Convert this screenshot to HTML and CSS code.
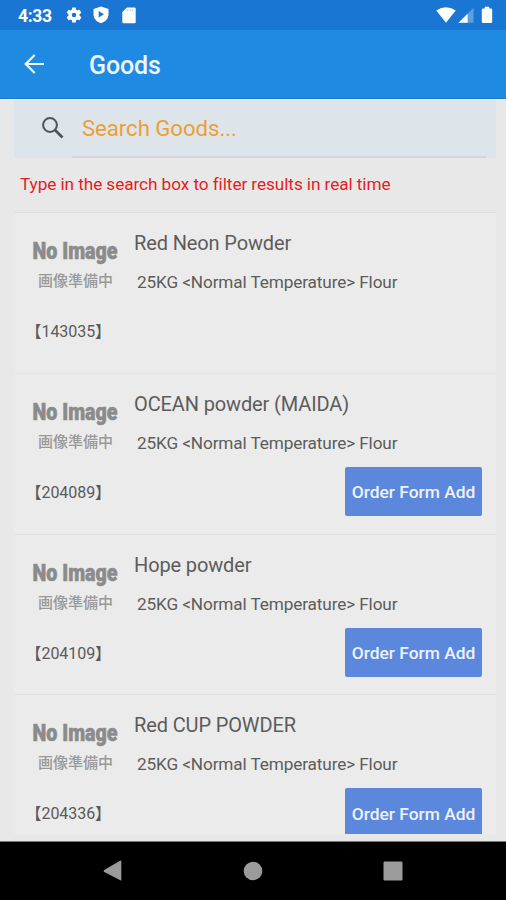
FILE: index.html
```html
<!DOCTYPE html>
<html lang="en">
<head>
<meta charset="utf-8">
<title>Goods</title>
<link rel="stylesheet" href="styles.css">
</head>
<body>
<div class="status">
  <span class="clock">4:33</span>
  <svg class="s-gear" width="18" height="18" viewBox="0 0 24 24"><path fill="#fff" fill-rule="evenodd" d="M19.4 13a7.500 7.500 0 0 0 0-2l2.100-1.650a.5.5 0 0 0 .12-.64l-2-3.460a.5.5 0 0 0-.61-.22l-2.490 1a7.300 7.300 0 0 0-1.690-.98l-.38-2.650A.5.5 0 0 0 14 2h-4a.5.5 0 0 0-.49.42l-.38 2.650c-.61.25-1.170.59-1.690.98l-2.490-1a.5.5 0 0 0-.61.22l-2 3.460a.5.5 0 0 0 .12.64L4.600 11a7.900 7.900 0 0 0 0 2l-2.110 1.650a.5.5 0 0 0-.12.64l2 3.460c.12.22.39.3.61.22l2.490-1c.52.4 1.080.73 1.690.98l.38 2.650c.03.24.24.42.49.42h4c.25 0 .46-.18.49-.42l.38-2.650c.61-.25 1.170-.59 1.690-.98l2.490 1c.23.09.49 0 .61-.22l2-3.460a.5.5 0 0 0-.12-.64zM12 15a3 3 0 1 1 0-6 3 3 0 0 1 0 6z"/></svg>
  <svg class="s-shield" width="18" height="20" viewBox="0 0 18 20"><path fill="#fff" fill-rule="evenodd" d="M9 1.500 16.500 4v5c0 4.600-3 7.800-7.500 9.200C4.500 16.800 1.500 13.600 1.500 9V4zM6.700 6v6.400L12 9.200z"/></svg>
  <svg class="s-card" width="14" height="17" viewBox="0 0 14 17"><path fill="#fff" d="M5 .5h7.500q1.200 0 1.200 1.200v13.200q0 1.300-1.200 1.300H1.600q-1.300 0-1.300-1.300V5z"/><path stroke="#1976d2" stroke-width="1" opacity=".4" d="M5.700 2.200v2M8.200 2.200v2M10.700 2.200v2"/></svg>
  <span class="spacer"></span>
  <svg class="s-wifi" width="20" height="17" viewBox="0 0 20 17"><path fill="#fff" d="M.3 3.400Q10-2.700 19.700 3.400L10 15.800z"/></svg>
  <svg class="s-cell" width="16" height="17" viewBox="0 0 16 17"><path fill="#fff" opacity=".3" d="M15.500.8v15H.5z"/><path fill="#fff" d="M9.600 6.700v9.100H.5z"/></svg>
  <svg class="s-batt" width="12" height="18" viewBox="0 0 12 18"><path fill="#fff" d="M3.800.8h4.400v1.700h1.700q1.300 0 1.300 1.300v12q0 1.300-1.300 1.300H2.100Q.8 17.100.8 15.800v-12q0-1.300 1.300-1.300h1.700z"/></svg>
</div>
<header class="appbar">
  <svg class="back" width="22" height="22" viewBox="0 0 22 22"><path fill="none" stroke="#eef5fc" stroke-width="2.200" d="M21 11H3M11.700 2 2.700 11l9 9"/></svg>
  <h1>Goods</h1>
</header>
<main class="content">
  <div class="search">
    <svg class="glass" width="24" height="24" viewBox="0 0 24 24"><circle cx="9" cy="9" r="6.900" fill="none" stroke="#4c545a" stroke-width="2"/><path stroke="#4c545a" stroke-width="2.700" d="m13.500 13.500 8 8"/></svg>
    <div class="field"><span>Search Goods...</span></div>
  </div>
  <p class="hint"><span>Type in the search box to filter results in real time</span></p>
  <section class="list">
    <article class="row">
      <svg class="noimg" width="90" height="78" viewBox="0 0 90 78"><rect width="90" height="78" fill="#eaebea"/><text class="ni-en" x="1.500" y="34.500" textLength="85" lengthAdjust="spacingAndGlyphs">No Image</text><text class="ni-jp" x="7" y="62.300" textLength="75">画像準備中</text></svg>
      <div class="info"><h2>Red Neon Powder</h2><p>25KG &lt;Normal Temperature&gt; Flour</p></div>
      <span class="code">【143035】</span>
    </article>
    <article class="row faint">
      <svg class="noimg" width="90" height="78" viewBox="0 0 90 78"><rect width="90" height="78" fill="#eaebea"/><text class="ni-en" x="1.500" y="34.500" textLength="85" lengthAdjust="spacingAndGlyphs">No Image</text><text class="ni-jp" x="7" y="62.300" textLength="75">画像準備中</text></svg>
      <div class="info"><h2>OCEAN powder (MAIDA)</h2><p>25KG &lt;Normal Temperature&gt; Flour</p></div>
      <span class="code">【204089】</span>
      <button class="add">Order Form Add</button>
    </article>
    <article class="row">
      <svg class="noimg" width="90" height="78" viewBox="0 0 90 78"><rect width="90" height="78" fill="#eaebea"/><text class="ni-en" x="1.500" y="34.500" textLength="85" lengthAdjust="spacingAndGlyphs">No Image</text><text class="ni-jp" x="7" y="62.300" textLength="75">画像準備中</text></svg>
      <div class="info"><h2>Hope powder</h2><p>25KG &lt;Normal Temperature&gt; Flour</p></div>
      <span class="code">【204109】</span>
      <button class="add">Order Form Add</button>
    </article>
    <article class="row">
      <svg class="noimg" width="90" height="78" viewBox="0 0 90 78"><rect width="90" height="78" fill="#eaebea"/><text class="ni-en" x="1.500" y="34.500" textLength="85" lengthAdjust="spacingAndGlyphs">No Image</text><text class="ni-jp" x="7" y="62.300" textLength="75">画像準備中</text></svg>
      <div class="info"><h2>Red CUP POWDER</h2><p>25KG &lt;Normal Temperature&gt; Flour</p></div>
      <span class="code">【204336】</span>
      <button class="add">Order Form Add</button>
    </article>
  </section>
</main>
<nav class="navbar">
  <svg width="20" height="22" viewBox="0 0 20 22"><path fill="#9b9b9b" d="M18.300.8v20L.8 11.800v-1.500L17.500.6z"/></svg>
  <svg width="20" height="20" viewBox="0 0 20 20"><circle cx="10" cy="10" r="9.300" fill="#9b9b9b"/></svg>
  <svg width="20" height="20" viewBox="0 0 20 20"><rect x=".5" y=".5" width="19" height="19" rx="1.200" fill="#9b9b9b"/></svg>
</nav>
</body>
</html>
```
FILE: styles.css
```css
* { box-sizing: border-box; }
body {
  margin: 0;
  width: 506px;
  height: 900px;
  overflow: hidden;
  display: flex;
  flex-direction: column;
  background: #e8e8e8;
  font-family: Roboto, "Noto Sans CJK JP", sans-serif;
}
h1, h2, p { margin: 0; font-weight: 400; white-space: nowrap; }
svg { display: block; flex: none; }
.status {
  flex: none;
  height: 30px;
  display: flex;
  align-items: center;
  background: #1976d2;
  padding: 0 13px 0 18px;
}
.clock { width: 47px; color: #fff; font-size: 17.500px; font-weight: 700; letter-spacing: -.3px; line-height: 30px; padding-top: 2px; }
.s-shield { margin-left: 9px; }
.s-card { margin-left: 12px; }
.spacer { flex: 1; }
.s-cell { margin-left: 2px; }
.s-batt { margin-left: 7px; }
.appbar {
  flex: none;
  height: 69px;
  display: flex;
  align-items: center;
  background: #1f8ae1;
  border-bottom: 1px solid #1579cf;
  padding-left: 23px;
}
.appbar h1 { margin-left: 44px; padding-top: 3px; color: #eef5fc; font-size: 25px; font-weight: 500; letter-spacing: -.1px; }
.content { flex: none; height: 735px; overflow: hidden; border-top: 1px solid #f2f7fa; padding: 0 10px 0 14px; }
.search {
  height: 58px;
  display: flex;
  background: #dde5eb;
  padding: 0 10px 0 27px;
}
.glass { margin-top: 16px; }
.field {
  flex: 1;
  margin-left: 7px;
  padding: 0 0 0 10px;
  border-bottom: 2px solid #d2d6da;
  color: #ee9f33;
  font-size: 22.200px;
  letter-spacing: -.05px;
  line-height: 56px;
}
.hint { height: 54px; padding-left: 6px; color: #e51c23; font-size: 17.200px; letter-spacing: -.07px; line-height: 52px; }
.row {
  height: 160.800px;
  display: grid;
  grid-template-columns: 103px 196px 1fr;
  grid-template-rows: 93px 1fr;
  border-top: 1px solid #dedede;
  background: #ebebeb;
  padding-left: 17px;
}
.row.faint { border-top-color: #e5e5e5; }
.noimg { margin-top: 11px; overflow: visible; }
.ni-en { font: 900 24px Roboto, sans-serif; fill: #8b8b8b; stroke: #8b8b8b; stroke-width: .6px; }
.ni-jp { font: 500 15px "Noto Sans CJK JP", sans-serif; fill: #999; }
.info { grid-column: 2 / 4; color: #5c5c5c; }
.info h2 { margin-top: 16px; font-size: 20px; letter-spacing: -.13px; line-height: 28px; }
.info p { margin: 13px 0 0 3px; font-size: 17.200px; letter-spacing: -.12px; line-height: 24px; }
.code { margin: 14px 0 0 -5.500px; color: #5a5a5a; font-size: 16px; letter-spacing: -.05px; line-height: 24px; white-space: nowrap; }
.add {
  grid-column: 3;
  align-self: start;
  width: 137px;
  height: 49px;
  margin-left: 15px;
  padding: 2px 0 0;
  border: 0;
  border-radius: 2px;
  background: #5b88dc;
  color: #edf2fc;
  font: 500 17.400px Roboto, sans-serif;
  white-space: nowrap;
}
.navbar {
  flex: 1;
  margin-top: 7px;
  border-top: 1px solid #777;
  background: #000;
  display: grid;
  grid-template-columns: 140px 140px 140px;
  justify-content: center;
  justify-items: center;
  align-items: center;
}
```
